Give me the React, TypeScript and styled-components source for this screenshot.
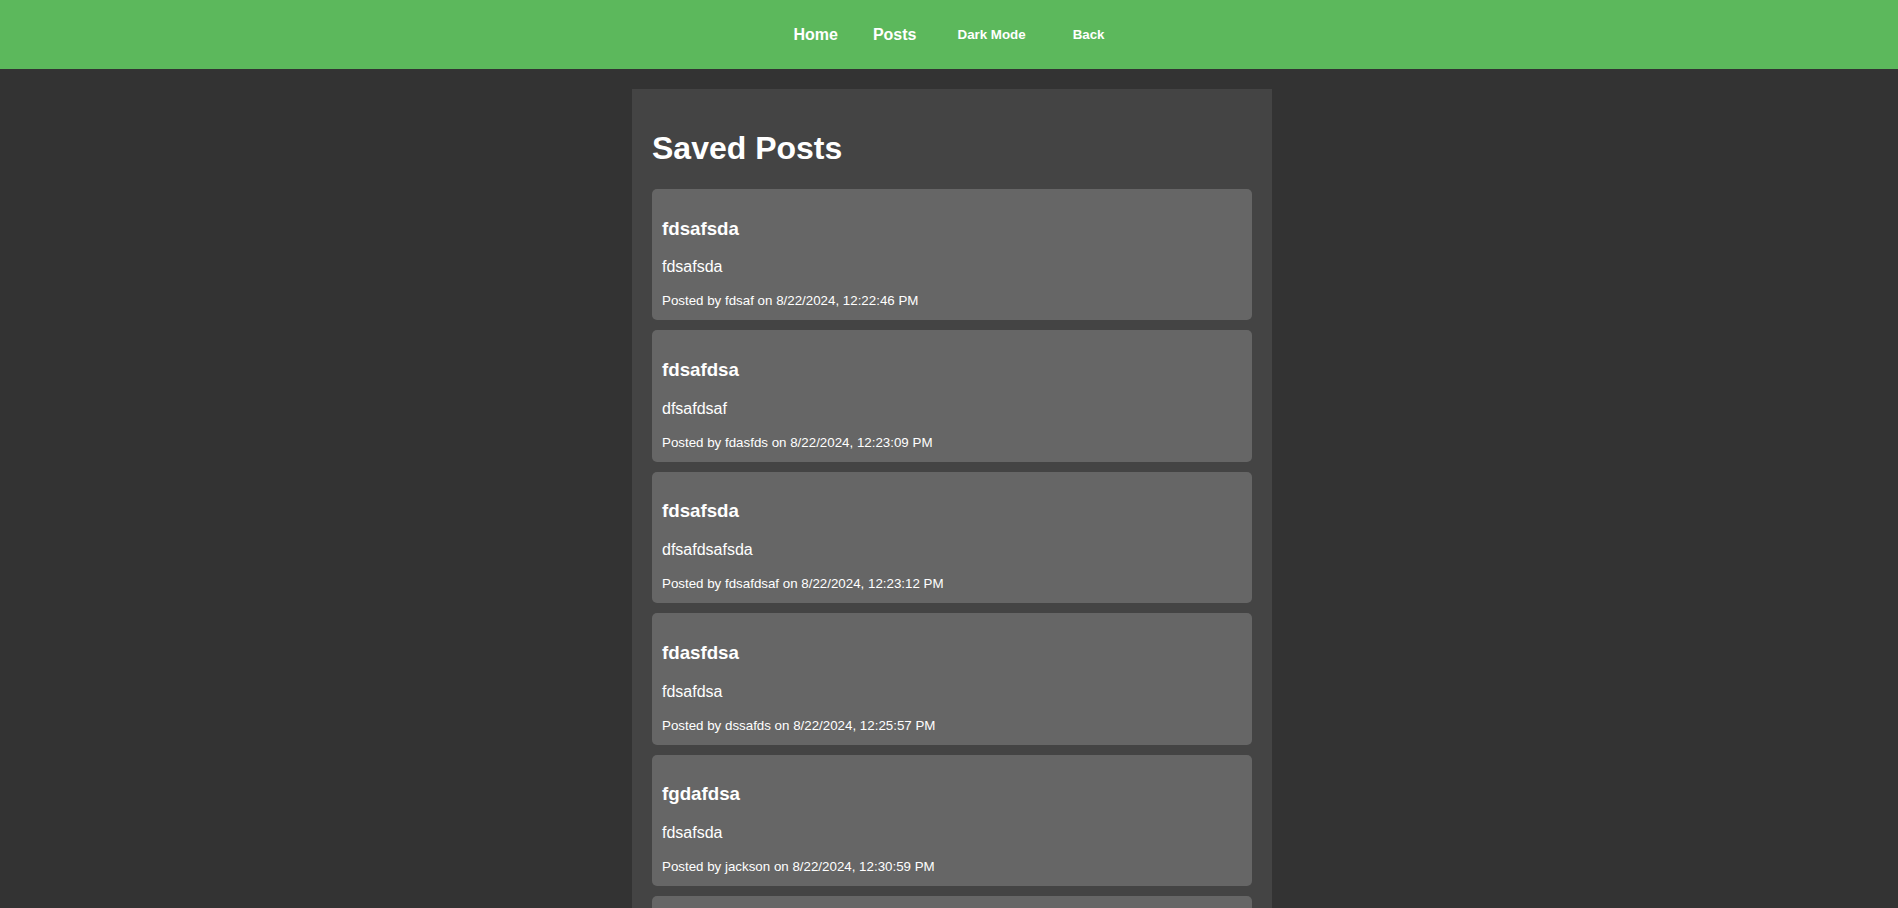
import React from "react";
import styled, { createGlobalStyle } from "styled-components";

const GlobalStyle = createGlobalStyle`
  html, body {
    margin: 0;
    padding: 0;
    background: #333333;
    color: #ffffff;
    font-family: "Liberation Sans", Arial, sans-serif;
  }
`;

const Header = styled.header`
  height: 69px;
  padding-left: 6px;
  background: #5cb85c;
  display: flex;
  align-items: center;
  justify-content: center;
`;

const Nav = styled.nav`
  display: flex;
  align-items: center;
  gap: 35px;
`;

const NavLink = styled.a`
  color: #ffffff;
  font-size: 16px;
  font-weight: bold;
  text-decoration: none;
  line-height: 18px;
  margin-top: 1px;
`;

const NavButton = styled.button`
  background: transparent;
  border: none;
  color: #ffffff;
  font-family: "Liberation Sans", Arial, sans-serif;
  font-size: 13.333px;
  font-weight: bold;
  padding: 1px 6px;
  cursor: pointer;
`;

const Page = styled.div`
  display: flex;
  justify-content: center;
  padding: 20px 0 0 6px;
`;

const Main = styled.main`
  width: 600px;
  padding: 20px;
  background: #444444;
  min-height: 900px;
`;

const Title = styled.h1`
  font-size: 32px;
  font-weight: bold;
  margin: 21.44px 0;
`;

const List = styled.div`
  display: flex;
  flex-direction: column;
  gap: 10px;
`;

const Card = styled.article`
  background: #666666;
  border-radius: 5px;
  padding: 10px;
`;

const CardTitle = styled.h3`
  font-size: 18.72px;
  font-weight: bold;
  margin: 18.72px 0;
`;

const CardBody = styled.p`
  font-size: 16px;
  margin: 16px 0;
`;

const Meta = styled.small`
  display: block;
  font-size: 13.333px;
  line-height: 18px;
  margin-top: 16px;
`;

type Post = { title: string; body: string; author: string; date: string };

const posts: Post[] = [
  { title: "fdsafsda", body: "fdsafsda", author: "fdsaf", date: "8/22/2024, 12:22:46 PM" },
  { title: "fdsafdsa", body: "dfsafdsaf", author: "fdasfds", date: "8/22/2024, 12:23:09 PM" },
  { title: "fdsafsda", body: "dfsafdsafsda", author: "fdsafdsaf", date: "8/22/2024, 12:23:12 PM" },
  { title: "fdasfdsa", body: "fdsafdsa", author: "dssafds", date: "8/22/2024, 12:25:57 PM" },
  { title: "fgdafdsa", body: "fdsafsda", author: "jackson", date: "8/22/2024, 12:30:59 PM" },
  { title: "fdsafdsa", body: "fdsafdsa", author: "jackson", date: "8/22/2024, 12:31:20 PM" },
];

export default function App() {
  return (
    <>
      <GlobalStyle />
      <Header>
        <Nav>
          <NavLink href="#">Home</NavLink>
          <NavLink href="#">Posts</NavLink>
          <NavButton>Dark Mode</NavButton>
          <NavButton>Back</NavButton>
        </Nav>
      </Header>
      <Page>
        <Main>
          <Title>Saved Posts</Title>
          <List>
            {posts.map((p, i) => (
              <Card key={i}>
                <CardTitle>{p.title}</CardTitle>
                <CardBody>{p.body}</CardBody>
                <Meta>
                  Posted by {p.author} on {p.date}
                </Meta>
              </Card>
            ))}
          </List>
        </Main>
      </Page>
    </>
  );
}
